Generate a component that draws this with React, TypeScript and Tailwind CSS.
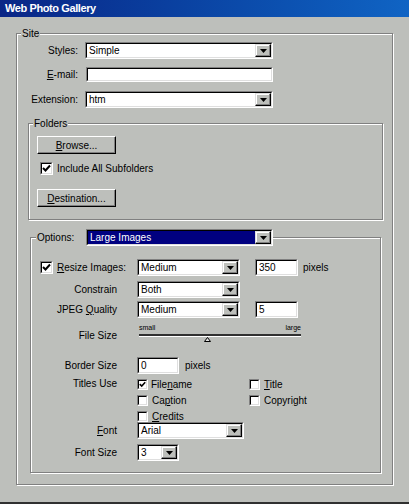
import React from "react";

const Font = "font-['Liberation_Sans',Arial,sans-serif]";

function Arrow() {
  return (
    <div className="flex h-full w-[16px] shrink-0 items-center justify-center border border-t-[#dfdfdf] border-l-[#dfdfdf] border-b-black border-r-black bg-[#bdbfbb] shadow-[inset_-1px_-1px_0_#808080,inset_1px_1px_0_#fff]">
      <svg width="7" height="4" viewBox="0 0 7 4">
        <path d="M0 0H7L3.5 4Z" fill="#000" />
      </svg>
    </div>
  );
}

function Sunken({ className = "", children }: any) {
  return (
    <div
      className={`shrink-0 border border-t-[#808080] border-l-[#808080] border-b-white border-r-white ${className}`}
    >
      <div className="flex h-full w-full border border-t-black border-l-black border-b-[#dfdfdf] border-r-[#dfdfdf]">
        {children}
      </div>
    </div>
  );
}

function Select({ value, className = "", selected = false }: any) {
  return (
    <Sunken className={`h-[17px] ${className}`}>
      <div
        className={`flex-1 pl-[2px] text-[10px] leading-[13px] ${
          selected ? "bg-[#000080] text-white" : "bg-white"
        }`}
      >
        {value}
      </div>
      <Arrow />
    </Sunken>
  );
}

function Input({ value = "", className = "" }: any) {
  return (
    <Sunken className={`h-[17px] ${className}`}>
      <div className="flex-1 bg-white pl-[2px] text-[10px] leading-[13px]">{value}</div>
    </Sunken>
  );
}

function Check({ checked = false, small = false }: any) {
  return (
    <Sunken className={small ? "h-[11px] w-[11px]" : "h-[13px] w-[13px]"}>
      <div className="flex flex-1 items-center justify-center bg-white">
        {checked && (
          <svg width={small ? 7 : 9} height={small ? 7 : 9} viewBox="0 0 9 9">
            <path d="M1 4 L3.5 6.5 L8 1.5" fill="none" stroke="#000" strokeWidth="2" />
          </svg>
        )}
      </div>
    </Sunken>
  );
}

function Btn({ children }: any) {
  return (
    <button
      type="button"
      className="flex h-[18px] w-[79px] items-center justify-center border border-t-white border-l-white border-b-black border-r-black bg-[#bdbfbb] text-[10px] leading-[13px] shadow-[inset_-1px_-1px_0_#808080]"
    >
      {children}
    </button>
  );
}

function Label({ children }: any) {
  return <span className="w-[86px] shrink-0 text-right">{children}</span>;
}

export default function App() {
  return (
    <div
      className={`${Font} flex h-[504px] w-[409px] flex-col border-b-2 border-b-[#303030] bg-[#bdbfbb] text-[10px] leading-[13px] text-black`}
    >
      <div className="h-[17px] shrink-0 bg-linear-to-r from-[#0a2586] to-[#1064c4] pl-[5px] text-[11px] font-bold leading-[17px] tracking-[-0.4px] text-white">
        Web Photo Gallery
      </div>

      <fieldset className="ml-[16px] mt-[10px] w-[377px] border border-[#808080] pb-[11px] shadow-[1px_1px_0_#fff,inset_1px_1px_0_#fff]">
        <legend className="ml-[4px] bg-[#bdbfbb] px-[1px] leading-[13px]">Site</legend>

        <div className="mt-[2px] flex items-center">
          <span className="w-[61px] text-right">Styles:</span>
          <Select value="Simple" className="ml-[7px] w-[188px]" />
        </div>
        <div className="mt-[8px] flex items-center">
          <span className="w-[61px] text-right">
            <u>E</u>-mail:
          </span>
          <Sunken className="ml-[8px] h-[15px] w-[187px]">
            <div className="flex-1 bg-white" />
          </Sunken>
        </div>
        <div className="mt-[9px] flex items-center">
          <span className="w-[61px] text-right">Extension:</span>
          <Select value="htm" className="ml-[7px] w-[188px]" />
        </div>

        <fieldset className="ml-[11px] mt-[9px] w-[355px] border border-[#808080] pb-[12px] shadow-[1px_1px_0_#fff,inset_1px_1px_0_#fff]">
          <legend className="ml-[4px] bg-[#bdbfbb] px-[1px] leading-[13px]">Folders</legend>
          <div className="ml-[8px] mt-[6px]">
            <Btn>
              <span>
                <u>B</u>rowse...
              </span>
            </Btn>
          </div>
          <div className="ml-[11px] mt-[8px] flex items-center">
            <Check checked />
            <span className="ml-[4px]">Include All Subfolders</span>
          </div>
          <div className="ml-[8px] mt-[14px]">
            <Btn>
              <span>
                <u>D</u>estination...
              </span>
            </Btn>
          </div>
        </fieldset>

        <fieldset className="ml-[13px] mt-[9px] w-[351px] border border-[#808080] pb-[11px] shadow-[1px_1px_0_#fff,inset_1px_1px_0_#fff]">
          <legend className="ml-[5px] flex items-center bg-[#bdbfbb] pl-[1px]">
            <span className="w-[49px]">Options:</span>
            <Select value="Large Images" selected className="w-[187px]" />
          </legend>

          <div className="mt-[13px] flex h-[17px] items-center">
            <div className="flex w-[106px] shrink-0 items-center pl-[9px]">
              <Check checked />
              <span className="ml-[4px]">
                <u>R</u>esize Images:
              </span>
            </div>
            <Select value="Medium" className="w-[103px]" />
            <Input value="350" className="ml-[15px] w-[43px]" />
            <span className="ml-[5px]">pixels</span>
          </div>

          <div className="mt-[5px] flex h-[17px] items-center">
            <Label>Constrain</Label>
            <Select value="Both" className="ml-[20px] w-[103px]" />
          </div>

          <div className="mt-[3px] flex h-[17px] items-center">
            <Label>
              JPEG <u>Q</u>uality
            </Label>
            <Select value="Medium" className="ml-[20px] w-[103px]" />
            <Input value="5" className="ml-[15px] w-[43px]" />
          </div>

          <div className="mt-[2px] flex items-end">
            <Label>File Size</Label>
            <div className="ml-[20px] h-[22px] w-[164px]">
              <div className="flex h-[12px] items-end justify-between pl-[2px] text-[7px] leading-[8px]">
                <span>small</span>
                <span>large</span>
              </div>
              <div className="relative ml-[2px] mt-[2px] h-[3px] w-[162px] border-t-2 border-b border-t-[#303030] border-b-white">
                <svg
                  className="absolute left-[65px] top-[1px]"
                  width="7"
                  height="5"
                  viewBox="0 0 7 5"
                >
                  <path d="M3.5 0.5L6.5 4.5H0.5Z" fill="#dfdfdf" stroke="#000" strokeWidth="1" />
                </svg>
              </div>
            </div>
          </div>

          <div className="mt-[15px] flex h-[17px] items-center">
            <Label>Border Size</Label>
            <Input value="0" className="ml-[20px] w-[42px]" />
            <span className="ml-[6px]">pixels</span>
          </div>

          <div className="mt-[4px] flex items-start">
            <span className="w-[86px] shrink-0 text-right leading-[12px]">Titles Use</span>
            <div className="ml-[20px] grid grid-cols-[112px_auto] gap-y-[4px]">
              <div className="flex h-[12px] items-center">
                <Check checked small />
                <span className="ml-[3px]">
                  File<u>n</u>ame
                </span>
              </div>
              <div className="flex h-[12px] items-center">
                <Check small />
                <span className="ml-[4px]">
                  <u>T</u>itle
                </span>
              </div>
              <div className="flex h-[12px] items-center">
                <Check small />
                <span className="ml-[4px]">
                  Ca<u>p</u>tion
                </span>
              </div>
              <div className="flex h-[12px] items-center">
                <Check small />
                <span className="ml-[4px]">
                  Copyri<u>g</u>ht
                </span>
              </div>
              <div className="flex h-[12px] items-center">
                <Check small />
                <span className="ml-[4px]">
                  <u>C</u>redits
                </span>
              </div>
            </div>
          </div>

          <div className="flex h-[17px] items-center">
            <Label>
              <u>F</u>ont
            </Label>
            <Select value="Arial" className="ml-[20px] w-[107px]" />
          </div>

          <div className="mt-[5px] flex h-[17px] items-center">
            <Label>Font Size</Label>
            <Select value="3" className="ml-[20px] w-[42px]" />
          </div>
        </fieldset>
      </fieldset>
    </div>
  );
}
